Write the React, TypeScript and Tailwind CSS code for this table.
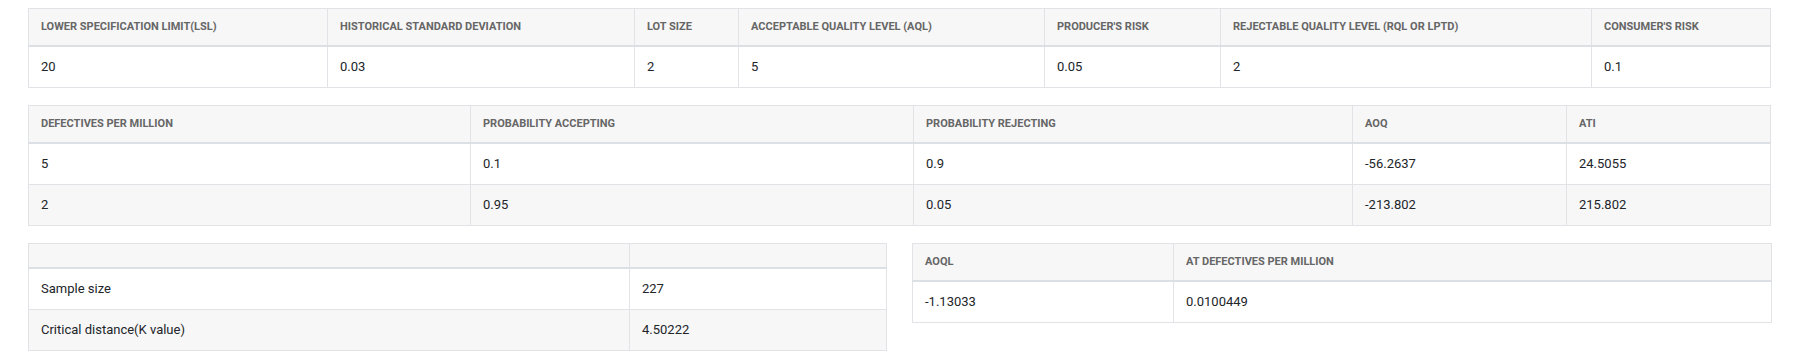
import React from 'react';

type Table = {
  cols: string[];
  head: string[];
  rows: string[][];
};

const inputs: Table = {
  cols: ['w-[299px]', 'w-[307px]', 'w-[104px]', 'w-[306px]', 'w-[176px]', 'w-[371px]', 'w-[179px]'],
  head: [
    'Lower Specification Limit(LSL)',
    'Historical Standard Deviation',
    'Lot Size',
    'Acceptable Quality Level (AQL)',
    "Producer's Risk",
    'Rejectable Quality Level (RQL or LPTD)',
    "Consumer's Risk",
  ],
  rows: [['20', '0.03', '2', '5', '0.05', '2', '0.1']],
};

const oc: Table = {
  cols: ['w-[442px]', 'w-[443px]', 'w-[439px]', 'w-[214px]', 'w-[204px]'],
  head: ['Defectives per million', 'Probability Accepting', 'Probability Rejecting', 'AOQ', 'ATI'],
  rows: [
    ['5', '0.1', '0.9', '-56.2637', '24.5055'],
    ['2', '0.95', '0.05', '-213.802', '215.802'],
  ],
};

const plan: Table = {
  cols: ['w-[601px]', 'w-[257px]'],
  head: ['', ''],
  rows: [
    ['Sample size', '227'],
    ['Critical distance(K value)', '4.50222'],
  ],
};

const aoql: Table = {
  cols: ['w-[261px]', 'w-[598px]'],
  head: ['AOQL', 'At Defectives per million'],
  rows: [['-1.13033', '0.0100449']],
};

const DataTable: React.FC<{ table: Table }> = ({ table }) => {
  const empty = table.head.every((h) => h === '');
  return (
    <table className="w-full table-fixed border-collapse border border-[#e1e3e6]">
      <colgroup>
        {table.cols.map((c, i) => (
          <col key={i} className={c} />
        ))}
      </colgroup>
      <thead>
        <tr className="bg-[#f7f7f7]">
          {table.head.map((h, i) => (
            <th
              key={i}
              className={`border border-[#e1e3e6] border-b-2 border-b-[#dcdfe3] px-3 text-left text-[11px] leading-4 font-bold uppercase text-[#666] ${
                empty ? 'h-[24px] py-0' : 'py-[10px]'
              }`}
            >
              {h}
            </th>
          ))}
        </tr>
      </thead>
      <tbody>
        {table.rows.map((row, r) => (
          <tr key={r} className={r % 2 === 1 ? 'bg-[#f7f7f7]' : 'bg-white'}>
            {row.map((cell, i) => (
              <td
                key={i}
                className="border border-[#e1e3e6] px-3 py-[10px] text-[13px] leading-5 text-[#212529]"
              >
                {cell}
              </td>
            ))}
          </tr>
        ))}
      </tbody>
    </table>
  );
};

export default function App() {
  return (
    <div className="min-h-screen bg-white pl-7 pr-[25px] pt-2 font-['Roboto',sans-serif]">
      <div className="flex flex-col gap-[17px]">
        <DataTable table={inputs} />
        <DataTable table={oc} />
        <div className="grid grid-cols-2 items-start gap-[25px]">
          <DataTable table={plan} />
          <DataTable table={aoql} />
        </div>
      </div>
    </div>
  );
}
